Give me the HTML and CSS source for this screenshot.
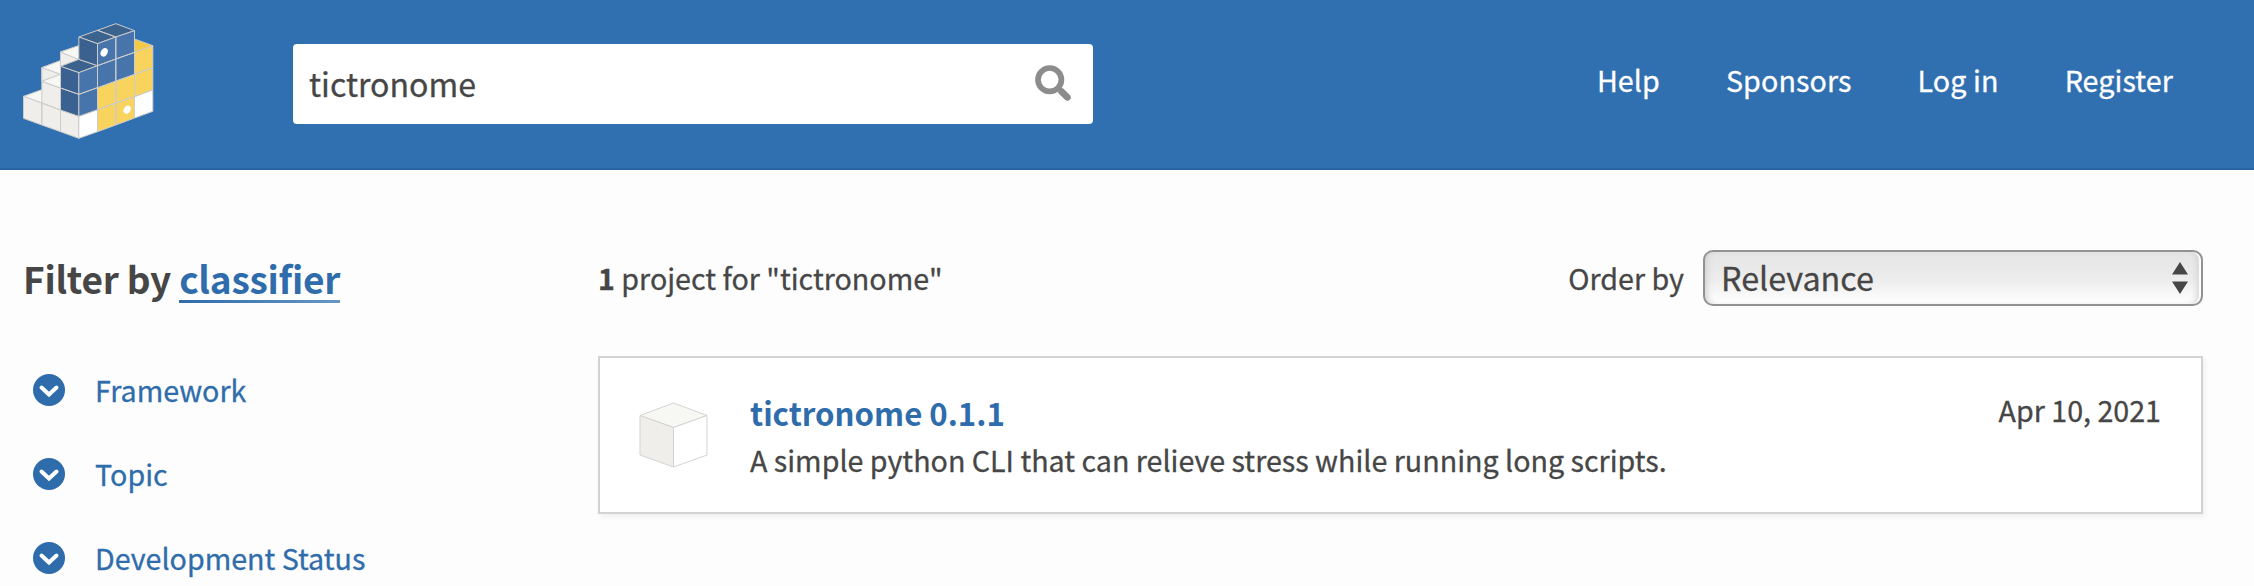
FILE: index.html
```html
<!DOCTYPE html>
<html lang="en">
<head>
<meta charset="utf-8">
<title>Search results · PyPI</title>
<link rel="stylesheet" href="styles.css">
</head>
<body>
<header class="site-header">
  <a class="logo" aria-label="PyPI">
    <svg viewBox="69 70 392 348" width="131" height="116" stroke="#ccc" stroke-width="3" stroke-linejoin="round">
      <!-- white blocks -->
      <path fill="#f7f7f4" d="M70 290 125 270 181 310 125 310ZM125 204 181 183 181 225 125 245ZM181 157 236 138V182L181 200Z"/>
      <path fill="#f7f7f4" d="M125 204 181 183V204L181 224ZM181 157 236 138V180Z"/>
      <path fill="#efeeea" d="M70 290 125 310V376L70 356ZM125 245 181 265V331L125 310ZM125 310 181 331V396L125 376ZM181 331 236 350V416L181 396ZM125 204 181 224 125 245ZM181 157 236 180 181 200Z"/>
      <path fill="#f7f7f4" d="M125 245 181 224V265Z"/>
      <path fill="#fff" d="M236 350 292 330V396L236 416ZM403 291 458 270V335L403 355Z"/>
      <!-- yellow blocks -->
      <path fill="#f6c944" d="M403 118 458 138 403 158Z"/>
      <path fill="#f8d35e" d="M403 158 458 138V204L403 224ZM403 224 458 204V270L403 291ZM347 244 403 224V291L347 310ZM292 264 347 244V310L292 330ZM292 330 347 310V376L292 396ZM347 310 403 291V355L347 376Z"/>
      <!-- blue blocks -->
      <path fill="#3c628e" d="M236 112 292 92 347 112 292 132ZM292 92 347 72 403 93 347 112ZM181 200 236 179 292 198 236 219Z"/>
      <path fill="#3a618f" d="M236 112 292 132V198L236 179ZM181 200 236 219V284L181 265ZM181 265 236 284V350L181 331Z"/>
      <path fill="#4774aa" d="M292 132 347 112V178L292 198ZM347 112 403 93V158L347 178ZM236 219 292 198V264L236 284ZM292 198 347 178V244L292 264ZM347 178 403 158V224L347 244ZM236 284 292 264V330L236 350Z"/>
      <g fill="#fff" stroke="none"><ellipse cx="312" cy="158" rx="10" ry="13.500" transform="rotate(28 312 158)"/><ellipse cx="381" cy="330" rx="10" ry="13" transform="rotate(28 381 330)"/></g>
    </svg>
  </a>
  <form class="search">
    <span class="search-text">tictronome</span>
    <svg class="search-icon" viewBox="0 0 38 38" width="38" height="38" fill="none" stroke="#8c8c8c">
      <circle cx="15.700" cy="15.700" r="11.700" stroke-width="5.700"/>
      <path d="M26.500 26.500 34 34" stroke-width="6.500"/>
      <path d="M27.500 27.500 33.500 33.500" stroke-width="6.500" stroke-linecap="round"/>
    </svg>
  </form>
  <nav class="site-nav"><a>Help</a><a>Sponsors</a><a>Log in</a><a>Register</a></nav>
</header>
<main class="page">
  <aside class="sidebar">
    <h2 class="filter-title">Filter by <a class="classifier">classifier</a></h2>
    <ul class="filters">
      <li class="filter"><svg class="chevron" viewBox="0 0 32 32" width="32" height="32"><circle cx="16" cy="16" r="16" fill="#2f6cab"/><path d="M8.500 13.500 16 20.500 23.500 13.500" fill="none" stroke="#fff" stroke-width="4" stroke-linecap="round"/></svg>Framework</li>
      <li class="filter"><svg class="chevron" viewBox="0 0 32 32" width="32" height="32"><circle cx="16" cy="16" r="16" fill="#2f6cab"/><path d="M8.500 13.500 16 20.500 23.500 13.500" fill="none" stroke="#fff" stroke-width="4" stroke-linecap="round"/></svg>Topic</li>
      <li class="filter"><svg class="chevron" viewBox="0 0 32 32" width="32" height="32"><circle cx="16" cy="16" r="16" fill="#2f6cab"/><path d="M8.500 13.500 16 20.500 23.500 13.500" fill="none" stroke="#fff" stroke-width="4" stroke-linecap="round"/></svg>Development Status</li>
    </ul>
  </aside>
  <section class="results">
    <div class="toolbar">
      <p class="count"><b>1</b> project for "tictronome"</p>
      <div class="order">
        <span>Order by</span>
        <div class="select">
          <span class="select-value">Relevance</span>
          <svg viewBox="0 0 16 32" width="16" height="32" fill="#464646"><path d="M8 0 16 12.500H0ZM0 19.500H16L8 32Z"/></svg>
        </div>
      </div>
    </div>
    <article class="package">
      <svg class="cube" viewBox="0 0 69 66" width="69" height="66" stroke="#d3d3d3" stroke-linejoin="round">
        <path fill="#f7f7f4" d="M1 13.500 34.500 1 68 13.500 34.500 25.500Z"/>
        <path fill="#efeeea" d="M1 13.500 34.500 25.500V65L1 53Z"/>
        <path fill="#fff" d="M34.500 25.500 68 13.500V53L34.500 65Z"/>
      </svg>
      <div class="package-body">
        <h3 class="package-title">tictronome 0.1.1</h3>
        <p class="package-desc">A simple python CLI that can relieve stress while running long scripts.</p>
      </div>
      <time class="package-date">Apr 10, 2021</time>
    </article>
  </section>
</main>
</body>
</html>
```
FILE: styles.css
```css
* { box-sizing: border-box; margin: 0; padding: 0; }
body {
  height: 586px;
  overflow: hidden;
  background: #fdfdfd;
  color: #464646;
  font: 28.65px/44px "Noto Sans CJK SC", "Noto Sans", sans-serif;
  -webkit-text-stroke: 0.3px currentColor;
}
.site-header {
  display: flex;
  align-items: center;
  height: 170px;
  padding: 0 81px 0 23px;
  background: #3070b1;
  border-bottom: 2px solid #2a65a0;
}
.logo { width: 270px; padding-bottom: 6px; }
.logo svg { display: block; }
.search {
  display: flex;
  align-items: center;
  justify-content: space-between;
  width: 800px;
  height: 80px;
  padding: 0 21px 0 16px;
  background: #fff;
  border-radius: 4px;
}
.search-text { font-size: 32.1px; padding-bottom: 3px; }
.search-icon { margin-bottom: 3px; }
.site-nav {
  display: flex;
  gap: 66px;
  margin-left: auto;
  padding-bottom: 9px;
  color: #fff;
  letter-spacing: 0.1px;
}
.page { display: flex; padding: 80px 51px 0 23px; }
.sidebar { width: 575px; flex: none; }
.filter-title {
  font-size: 37px;
  line-height: 56px;
  letter-spacing: -0.25px;
  -webkit-text-stroke: 0;
}
.classifier {
  color: #2f6cab;
  background: linear-gradient(to right, #2f6cab, #6996c4) 0 100% / 100% 3px no-repeat;
  display: inline-block;
  line-height: 50px;
}
.filters { margin-top: 42px; list-style: none; color: #2f6cab; }
.filter { display: flex; align-items: center; height: 84px; padding-left: 10px; gap: 30px; }
.results { flex: 1; }
.toolbar { display: flex; align-items: center; justify-content: space-between; height: 56px; }
.order { display: flex; align-items: center; gap: 19px; }
.select {
  display: flex;
  align-items: center;
  justify-content: space-between;
  width: 500px;
  height: 56px;
  padding: 0 13px 0 16px;
  font-size: 32.3px;
  border: 2px solid #929292;
  border-radius: 10px;
  background: linear-gradient(#e5e5e5, #ececec 50%, #fff);
  box-shadow: inset -2px 0 1px #fff, inset 5px 0 6px -3px #d0d0d0, inset -8px 0 6px -4px #d4d4d4;
}
.select-value { padding-bottom: 3px; }
.package {
  display: flex;
  height: 158px;
  margin-top: 50px;
  padding: 31px 40px 0 40px;
  background: #fff;
  border: 2px solid #d3d3d3;
  box-shadow: 2px 3px 5px rgba(0, 0, 0, 0.06);
}
.cube { margin: 13px 42px 0 -1px; flex: none; }
.package-title { font-size: 31.2px; line-height: 47px; color: #2f6cab; -webkit-text-stroke: 0; }
.package-desc { line-height: 47px; }
.package-date { margin-left: auto; line-height: 42px; }
```
